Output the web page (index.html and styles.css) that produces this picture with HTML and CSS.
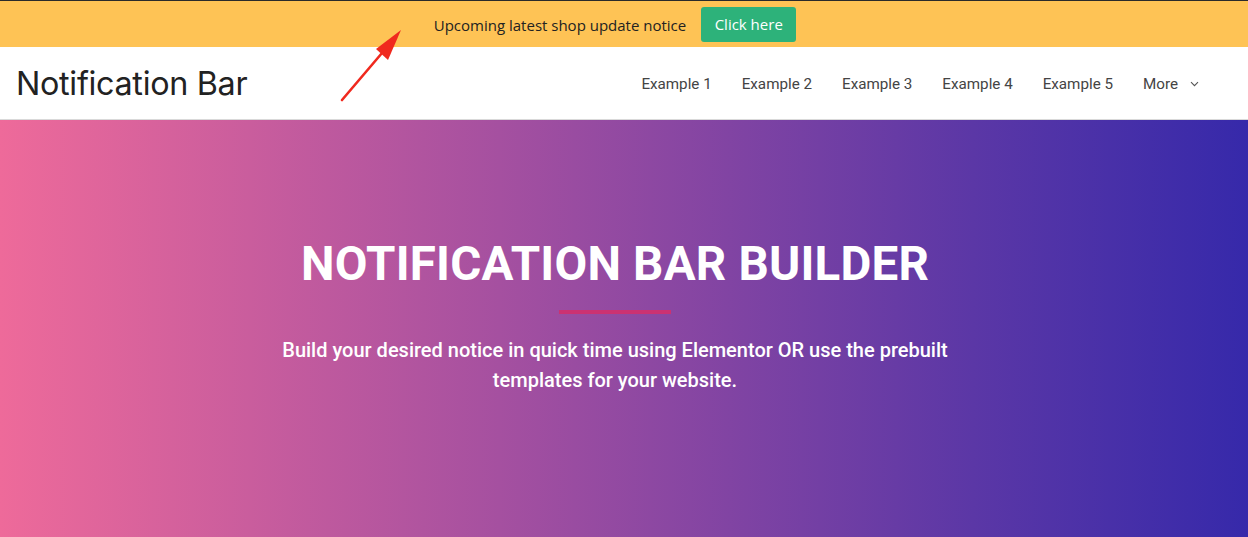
FILE: index.html
```html
<!DOCTYPE html>
<html lang="en">
<head>
<meta charset="utf-8">
<title>Notification Bar</title>
<link rel="stylesheet" href="styles.css">
</head>
<body>
<div class="notice">
  <span class="notice-text">Upcoming latest shop update notice</span>
  <a class="notice-btn" href="#">Click here</a>
</div>
<header class="site-header">
  <div class="logo">Notification Bar</div>
  <nav class="nav">
    <a href="#">Example 1</a>
    <a href="#">Example 2</a>
    <a href="#">Example 3</a>
    <a href="#">Example 4</a>
    <a href="#">Example 5</a>
    <a href="#" class="more">More
      <svg width="9" height="6" viewBox="0 0 9 6"><path d="M1 1.2l3.5 3.5 3.5-3.5" fill="none" stroke="#555" stroke-width="1.1"/></svg>
    </a>
  </nav>
</header>
<section class="hero">
  <h1>NOTIFICATION BAR BUILDER</h1>
  <div class="divider"></div>
  <p>Build your desired notice in quick time using Elementor OR use the prebuilt<br>templates for your website.</p>
</section>
<svg class="arrow" width="80" height="90" viewBox="0 0 80 90">
  <line x1="12" y1="80" x2="52" y2="33" stroke="#F0291E" stroke-width="2.6" stroke-linecap="round"/>
  <polygon points="71,10 58,40 46,29" fill="#F0291E"/>
</svg>
</body>
</html>
```
FILE: styles.css
```css
* { box-sizing: border-box; }
html, body { margin: 0; padding: 0; }
body {
  font-family: "Open Sans", "Liberation Sans", sans-serif;
  background: #fff;
  position: relative;
  width: 1248px;
  height: 537px;
  overflow: hidden;
}
.notice {
  height: 47px;
  border-top: 1px solid #2a2a2a;
  background: #FEC355;
  display: flex;
  align-items: center;
  justify-content: center;
  gap: 15px;
  padding-right: 18px;
}
.notice-text {
  font-size: 15px;
  color: #222;
  padding-top: 1px;
}
.notice-btn {
  display: inline-flex;
  align-items: center;
  justify-content: center;
  width: 95px;
  height: 35px;
  background: #2DB27A;
  color: #fff;
  text-decoration: none;
  font-size: 15px;
  border-radius: 3px;
}
.site-header {
  height: 73px;
  border-bottom: 1px solid #d9d9d9;
  display: flex;
  align-items: center;
  justify-content: space-between;
  padding: 0 49px 0 16px;
}
.logo {
  font-family: Inter, Roboto, sans-serif;
  font-size: 32.3px;
  color: #222;
  letter-spacing: -0.3px;
  padding-top: 1px;
}
.nav {
  display: flex;
  align-items: center;
  gap: 30px;
  padding-top: 2px;
}
.nav a {
  font-family: Roboto, sans-serif;
  font-size: 15.2px;
  color: #444;
  text-decoration: none;
}
.nav .more {
  display: flex;
  align-items: center;
  gap: 12px;
}
.hero {
  height: 417px;
  background: linear-gradient(90deg, #EE6A9A 0%, #A550A0 40%, #5B37A6 78%, #3629AA 100%);
  color: #fff;
  text-align: center;
  padding-top: 112px;
  padding-right: 18px;
  font-family: Roboto, sans-serif;
}
.hero h1 {
  margin: 0;
  font-size: 47.5px;
  font-weight: 700;
  line-height: 64px;
  letter-spacing: 0.2px;
}
.divider {
  width: 112px;
  height: 4px;
  background: #CB3272;
  margin: 14px auto 0;
}
.hero p {
  margin: 21px 0 0;
  font-size: 20px;
  font-weight: 500;
  line-height: 30px;
}
.arrow {
  position: absolute;
  left: 330px;
  top: 20px;
}
```
